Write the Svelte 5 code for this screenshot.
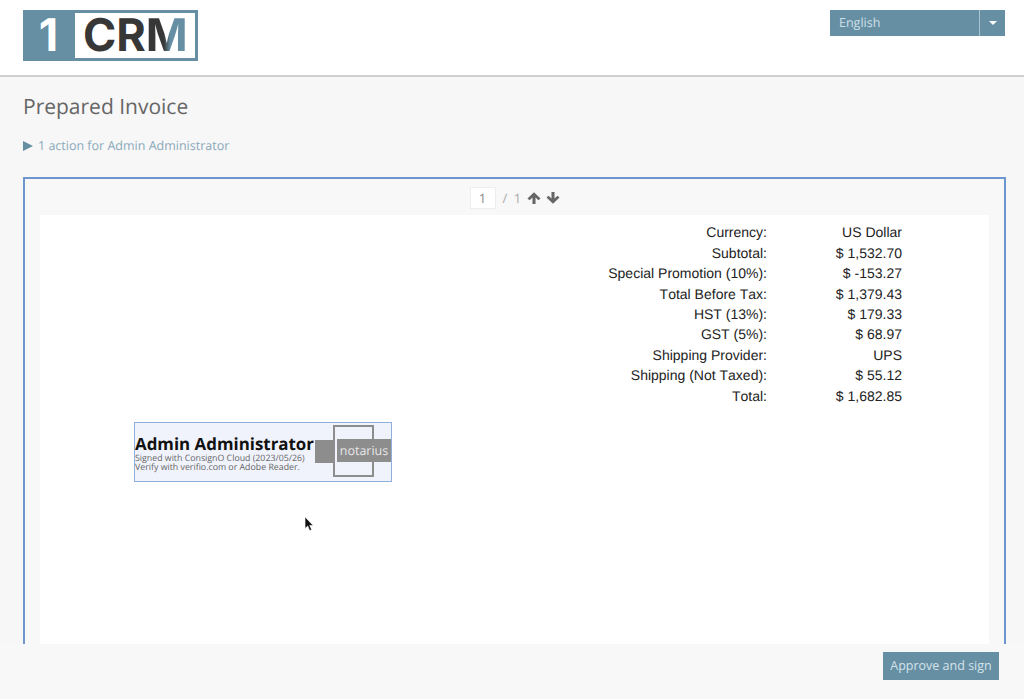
<script>
  const rows = [
    ['Currency:', 'US Dollar'],
    ['Subtotal:', '$ 1,532.70'],
    ['Special Promotion (10%):', '$ -153.27'],
    ['Total Before Tax:', '$ 1,379.43'],
    ['HST (13%):', '$ 179.33'],
    ['GST (5%):', '$ 68.97'],
    ['Shipping Provider:', 'UPS'],
    ['Shipping (Not Taxed):', '$ 55.12'],
    ['Total:', '$ 1,682.85']
  ];
</script>

<div class="page">
  <header class="top">
    <div class="logo">
      <span class="one">1</span>
      <span class="crm">CR<span class="m">M</span></span>
    </div>
    <div class="lang">
      <span class="lang-name">English</span>
      <span class="lang-caret"><i></i></span>
    </div>
  </header>

  <main class="content">
    <h1>Prepared Invoice</h1>
    <p class="actions"><span class="tri"></span>1 action for Admin Administrator</p>

    <section class="frame">
      <div class="pager">
        <span class="pageno">1</span>
        <span class="of">/ 1</span>
        <svg class="arrow" viewBox="0 0 12 12" aria-hidden="true"><path d="M6 1 L11.6 6.4 L9.8 8 L7.3 5.6 V11.2 H4.7 V5.6 L2.2 8 L.4 6.4 Z" /></svg>
        <svg class="arrow" viewBox="0 0 12 12" aria-hidden="true"><path d="M6 11 L11.6 5.6 L9.8 4 L7.3 6.4 V.8 H4.7 V6.4 L2.2 4 L.4 5.6 Z" /></svg>
      </div>
      <div class="paper">
        <div class="totals">
          {#each rows as [label, value]}
            <span class="label">{label}</span>
            <span class="value">{value}</span>
          {/each}
        </div>

        <div class="sig">
          <div class="sig-text">
            <strong>Admin Administrator</strong>
            <small>Signed with ConsignO Cloud (2023/05/26)</small>
            <small>Verify with verifio.com or Adobe Reader.</small>
          </div>
          <div class="stamp-block"></div>
          <div class="stamp-outline"></div>
          <div class="stamp-name">notarius</div>
        </div>

        <svg class="cursor" viewBox="0 0 12 18" aria-hidden="true"><path d="M1 1 V14 L4 11.2 L6.2 16.4 L8.4 15.4 L6.2 10.6 H10 Z" /></svg>
      </div>
    </section>
  </main>

  <footer class="bottom">
    <button type="button" class="approve">Approve and sign</button>
  </footer>
</div>

<style>
  :global(body) {
    margin: 0;
    background: #f7f7f7;
  }
  .page {
    height: 699px;
    overflow: hidden;
    position: relative;
    font-family: "Open Sans", sans-serif;
    text-rendering: geometricPrecision;
  }
  .top {
    height: 77px;
    box-sizing: border-box;
    background: #fff;
    border-bottom: 2px solid #cfcfcf;
    display: flex;
    justify-content: space-between;
    align-items: flex-start;
    padding: 10px 19px 0 23px;
  }
  .logo {
    width: 175px;
    height: 51px;
    box-sizing: border-box;
    border: 3px solid #668fa4;
    border-left: 0;
    display: flex;
    background: #fff;
  }
  .one {
    width: 52px;
    background: #668fa4;
    color: #fff;
    font: 700 45px/44px Inter, sans-serif;
    text-align: center;
    padding-right: 1px;
    box-sizing: border-box;
  }
  .crm {
    font: 700 45px/44px Inter, sans-serif;
    color: #373737;
    padding-left: 8px;
    white-space: nowrap;
  }
  .m {
    background: linear-gradient(90deg, #373737 0 42%, #668fa4 58% 100%);
    -webkit-background-clip: text;
    background-clip: text;
    color: transparent;
  }
  .lang {
    width: 175px;
    height: 26px;
    display: flex;
    background: #668fa4;
    color: #cfe0e8;
    font-size: 12.5px;
    line-height: 26px;
  }
  .lang-name {
    flex: 1;
    padding-left: 9px;
  }
  .lang-caret {
    width: 25px;
    border-left: 1px solid #a9c3d0;
    display: flex;
    align-items: center;
    justify-content: center;
  }
  .lang-caret i {
    border: 4px solid transparent;
    border-top: 4px solid #fff;
    border-bottom: 0;
  }
  .content {
    padding: 0 18px 0 23px;
  }
  h1 {
    margin: 0;
    padding-top: 16px;
    font-size: 21px;
    line-height: 28px;
    font-weight: 400;
    color: #666;
  }
  .actions {
    margin: 0;
    padding-top: 15px;
    font-size: 12.5px;
    line-height: 20px;
    color: #8aa9ba;
    display: flex;
    align-items: center;
  }
  .tri {
    border-left: 10px solid #668fa4;
    border-top: 5px solid transparent;
    border-bottom: 5px solid transparent;
    margin-right: 5px;
  }
  .frame {
    margin-top: 21px;
    height: 520px;
    box-sizing: border-box;
    border: 2px solid #6d96cf;
    border-bottom: 0;
    background: #f8f8f8;
    padding: 0 15px;
  }
  .pager {
    height: 36px;
    display: flex;
    align-items: center;
    justify-content: center;
    color: #aaa;
    font-size: 13px;
    box-sizing: border-box;
    padding-top: 2px;
  }
  .pageno {
    width: 26px;
    height: 22px;
    box-sizing: border-box;
    background: #fff;
    border: 1px solid #eee;
    text-align: center;
    line-height: 21px;
    font-size: 13px;
    color: #888;
    margin-right: 7px;
  }
  .of {
    width: 18px;
    word-spacing: 3px;
    white-space: nowrap;
    margin-right: 6px;
  }
  .arrow {
    width: 14px;
    height: 14px;
    fill: #666;
  }
  .arrow + .arrow {
    margin-left: 5px;
  }
  .paper {
    position: relative;
    background: #fff;
    height: 429px;
    padding-top: 7.4px;
    box-sizing: border-box;
  }
  .totals {
    display: grid;
    grid-template-columns: 727px 135px;
    grid-auto-rows: 20.4px;
    font-family: "Liberation Sans", Arial, sans-serif;
    font-kerning: none;
    font-size: 14px;
    line-height: 20.4px;
    color: #222;
  }
  .label, .value {
    text-align: right;
  }
  .sig {
    position: absolute;
    left: 94px;
    top: 207px;
    width: 258px;
    height: 60px;
    box-sizing: border-box;
    border: 1px solid #8fb0dc;
    background: #f0f3fc;
  }
  .sig-text {
    position: absolute;
    left: 0;
    top: 10px;
    display: flex;
    flex-direction: column;
  }
  .sig-text strong {
    font-size: 16.9px;
    line-height: 21px;
    font-weight: 700;
    color: #111;
    white-space: nowrap;
  }
  .sig-text small {
    font-size: 8.8px;
    line-height: 9px;
    color: #666;
    white-space: nowrap;
  }
  .stamp-block {
    position: absolute;
    left: 180px;
    top: 17px;
    width: 18px;
    height: 23px;
    background: #8d8d8d;
  }
  .stamp-outline {
    position: absolute;
    left: 198px;
    top: 2px;
    width: 37px;
    height: 48px;
    border: 2px solid #8d8d8d;
  }
  .stamp-name {
    position: absolute;
    left: 202px;
    top: 16px;
    width: 54px;
    height: 23px;
    background: #8d8d8d;
    color: #e6e6e6;
    font-size: 12.5px;
    line-height: 23px;
    text-align: center;
  }
  .cursor {
    position: absolute;
    left: 264px;
    top: 301px;
    width: 11px;
    height: 16px;
    fill: #111;
    stroke: #fff;
    stroke-width: .6;
  }
  .bottom {
    position: absolute;
    left: 0;
    right: 0;
    bottom: 0;
    height: 55px;
    background: #f8f8f8;
    display: flex;
    justify-content: flex-end;
    align-items: flex-start;
    padding: 8px 25px 0 0;
    box-sizing: border-box;
  }
  .approve {
    width: 116px;
    height: 28px;
    border: 0;
    padding: 0;
    background: #668fa4;
    color: #d5e3ea;
    font: 400 12.5px/28px "Open Sans", sans-serif;
  }
</style>
